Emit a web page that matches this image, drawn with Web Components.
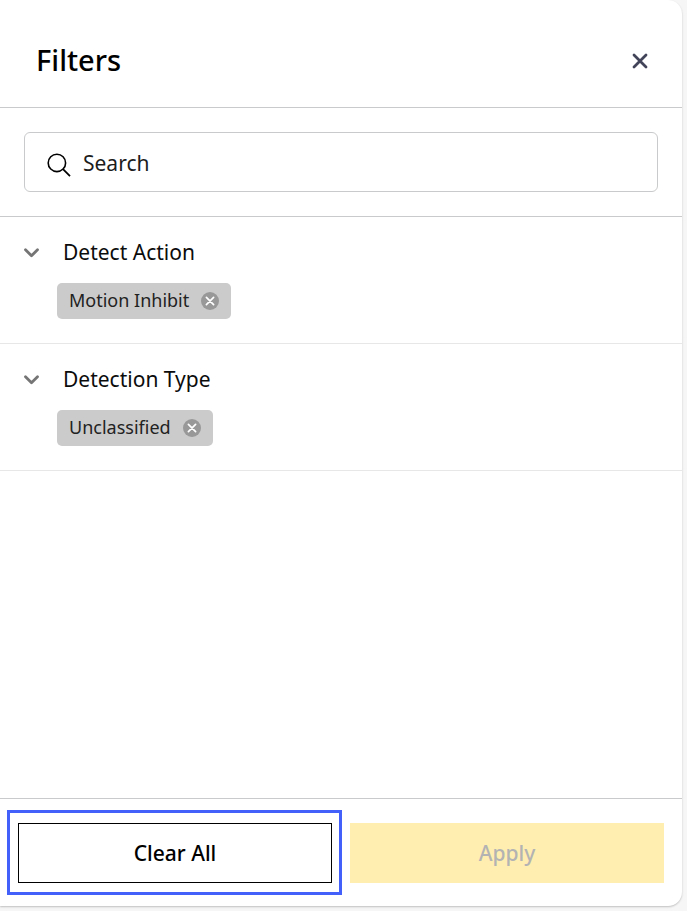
<!DOCTYPE html>
<html lang="en">
<head>
<meta charset="utf-8">
<title>Filters</title>
<style>
  html, body { height: 100%; }
  body { margin: 0; background: #f6f6f6; color: #000; font-family: "Noto Sans", "Open Sans", sans-serif; }
</style>
</head>
<body>
<filter-panel>
  <panel-header slot="header">Filters</panel-header>
  <search-field slot="search" label="Search"></search-field>
  <filter-group label="Detect Action"><filter-chip>Motion Inhibit</filter-chip></filter-group>
  <filter-group label="Detection Type"><filter-chip>Unclassified</filter-chip></filter-group>
  <action-button slot="actions" highlighted>Clear All</action-button>
  <action-button slot="actions" variant="primary" disabled>Apply</action-button>
</filter-panel>
<script>
  class BaseElement extends HTMLElement {
    connectedCallback() {
      if (this.shadowRoot) return;
      this.attachShadow({ mode: "open" }).innerHTML =
        "<style>*{box-sizing:border-box}button{font:inherit;color:inherit;margin:0;padding:0;border:0;background:none;cursor:pointer}svg{display:block}</style>" + this.render();
    }
  }

  customElements.define("filter-panel", class extends BaseElement {
    render() {
      return `<style>
        :host { display: block; box-sizing: border-box; height: 100%; padding: 0 5px 5px 0; }
        section { display: flex; flex-direction: column; height: 100%; background: #fff;
          border-radius: 0 14px 14px 0; box-shadow: 0 1px 2px rgba(0,0,0,.22); }
        .groups { flex: 1; overflow: auto; }
        footer { display: flex; gap: 18px; padding: 24px 18px 23px; border-top: 1px solid #c9cacb; }
      </style>
      <section aria-label="Filters">
        <slot name="header"></slot>
        <slot name="search"></slot>
        <div class="groups"><slot></slot></div>
        <footer><slot name="actions"></slot></footer>
      </section>`;
    }
  });

  customElements.define("panel-header", class extends BaseElement {
    render() {
      return `<style>
        :host { display: block; }
        header { display: flex; align-items: center; justify-content: space-between;
          padding: 40px 30px 27px 36px; border-bottom: 1px solid #c9cacb; }
        h1 { margin: 0; font-size: 29px; line-height: 40px; font-weight: 500; }
        button { padding: 6px 4px 4px; color: #424459; }
      </style>
      <header><h1><slot></slot></h1>
        <button type="button" aria-label="Close"><svg width="16" height="16" viewBox="0 0 16 16" fill="none" stroke="currentColor" stroke-width="2.8" stroke-linecap="round"><path d="M2 2 14 14M14 2 2 14"/></svg></button>
      </header>`;
    }
  });

  customElements.define("search-field", class extends BaseElement {
    render() {
      const label = this.getAttribute("label");
      return `<style>
        :host { display: block; padding: 24px; border-bottom: 1px solid #c9cacb; }
        label { display: flex; align-items: center; gap: 12px; height: 60px; padding: 2px 22px 0;
          border: 1px solid #c9cacb; border-radius: 6px; }
        svg { flex: none; margin-top: 4px; }
        input { flex: 1; min-width: 0; padding: 0; border: 0; outline: 0; background: none; font: inherit;
          font-size: 21px; line-height: 30px; color: #1c1c1c; }
        input::placeholder { color: #1c1c1c; opacity: 1; }
      </style>
      <label><svg width="24" height="24" viewBox="0 0 24 24" fill="none" stroke="#000" stroke-width="1.6"><circle cx="9.9" cy="9.9" r="8.7"/><path d="m16 16.2 7 7" stroke-width="1.8"/></svg>
        <input type="search" placeholder="${label}" aria-label="${label}"></label>`;
    }
  });

  customElements.define("filter-group", class extends BaseElement {
    render() {
      return `<style>
        :host { display: block; padding: 20px 24px 24px; border-bottom: 1px solid #e7e7e7; }
        button { display: flex; align-items: center; gap: 23px; height: 30px; font-size: 21px; line-height: 30px; color: #0c0c0c; }
        svg { margin-top: 2px; }
        .chips { display: flex; flex-wrap: wrap; gap: 8px; padding: 16px 0 0 33px; }
      </style>
      <button type="button" aria-expanded="false"><svg width="16" height="10" viewBox="0 0 16 10" fill="none" stroke="#757575" stroke-width="2.8" stroke-linecap="round" stroke-linejoin="round"><path d="m1.5 1.8 6 6 6-6"/></svg><span>${this.getAttribute("label")}</span></button>
      <div class="chips"><slot></slot></div>`;
    }
  });

  customElements.define("filter-chip", class extends BaseElement {
    render() {
      return `<style>
        :host { display: inline-flex; align-items: center; gap: 12px; box-sizing: border-box; height: 36px;
          padding: 0 12px; border-radius: 5px; background: #cbcbcb; color: #222; font-size: 18px; line-height: 24px; }
        span { padding-bottom: 2px; }
      </style>
      <span><slot></slot></span>
      <button type="button" aria-label="Remove"><svg width="18" height="18" viewBox="0 0 18 18"><circle cx="9" cy="9" r="9" fill="#989898"/><path d="m5.4 5.4 7.2 7.2m0-7.2-7.2 7.2" stroke="#fff" stroke-width="1.7" stroke-linecap="round"/></svg></button>`;
    }
  });

  customElements.define("action-button", class extends BaseElement {
    render() {
      return `<style>
        :host { position: relative; display: block; flex: 1; }
        :host([highlighted])::after { content: ""; position: absolute; inset: -13px -10px -12px -11px;
          border: 3px solid #4460fa; pointer-events: none; }
        button { display: block; width: 100%; height: 60px; border: 1px solid #000; background: #fff;
          font-size: 21px; line-height: 30px; font-weight: 500; color: #000; }
        :host([variant="primary"]) button { border-color: #ffeeb0; background: #ffeeb0; color: #b3b3b3; }
      </style>
      <button type="button"${this.hasAttribute("disabled") ? " disabled" : ""}><slot></slot></button>`;
    }
  });
</script>
</body>
</html>
